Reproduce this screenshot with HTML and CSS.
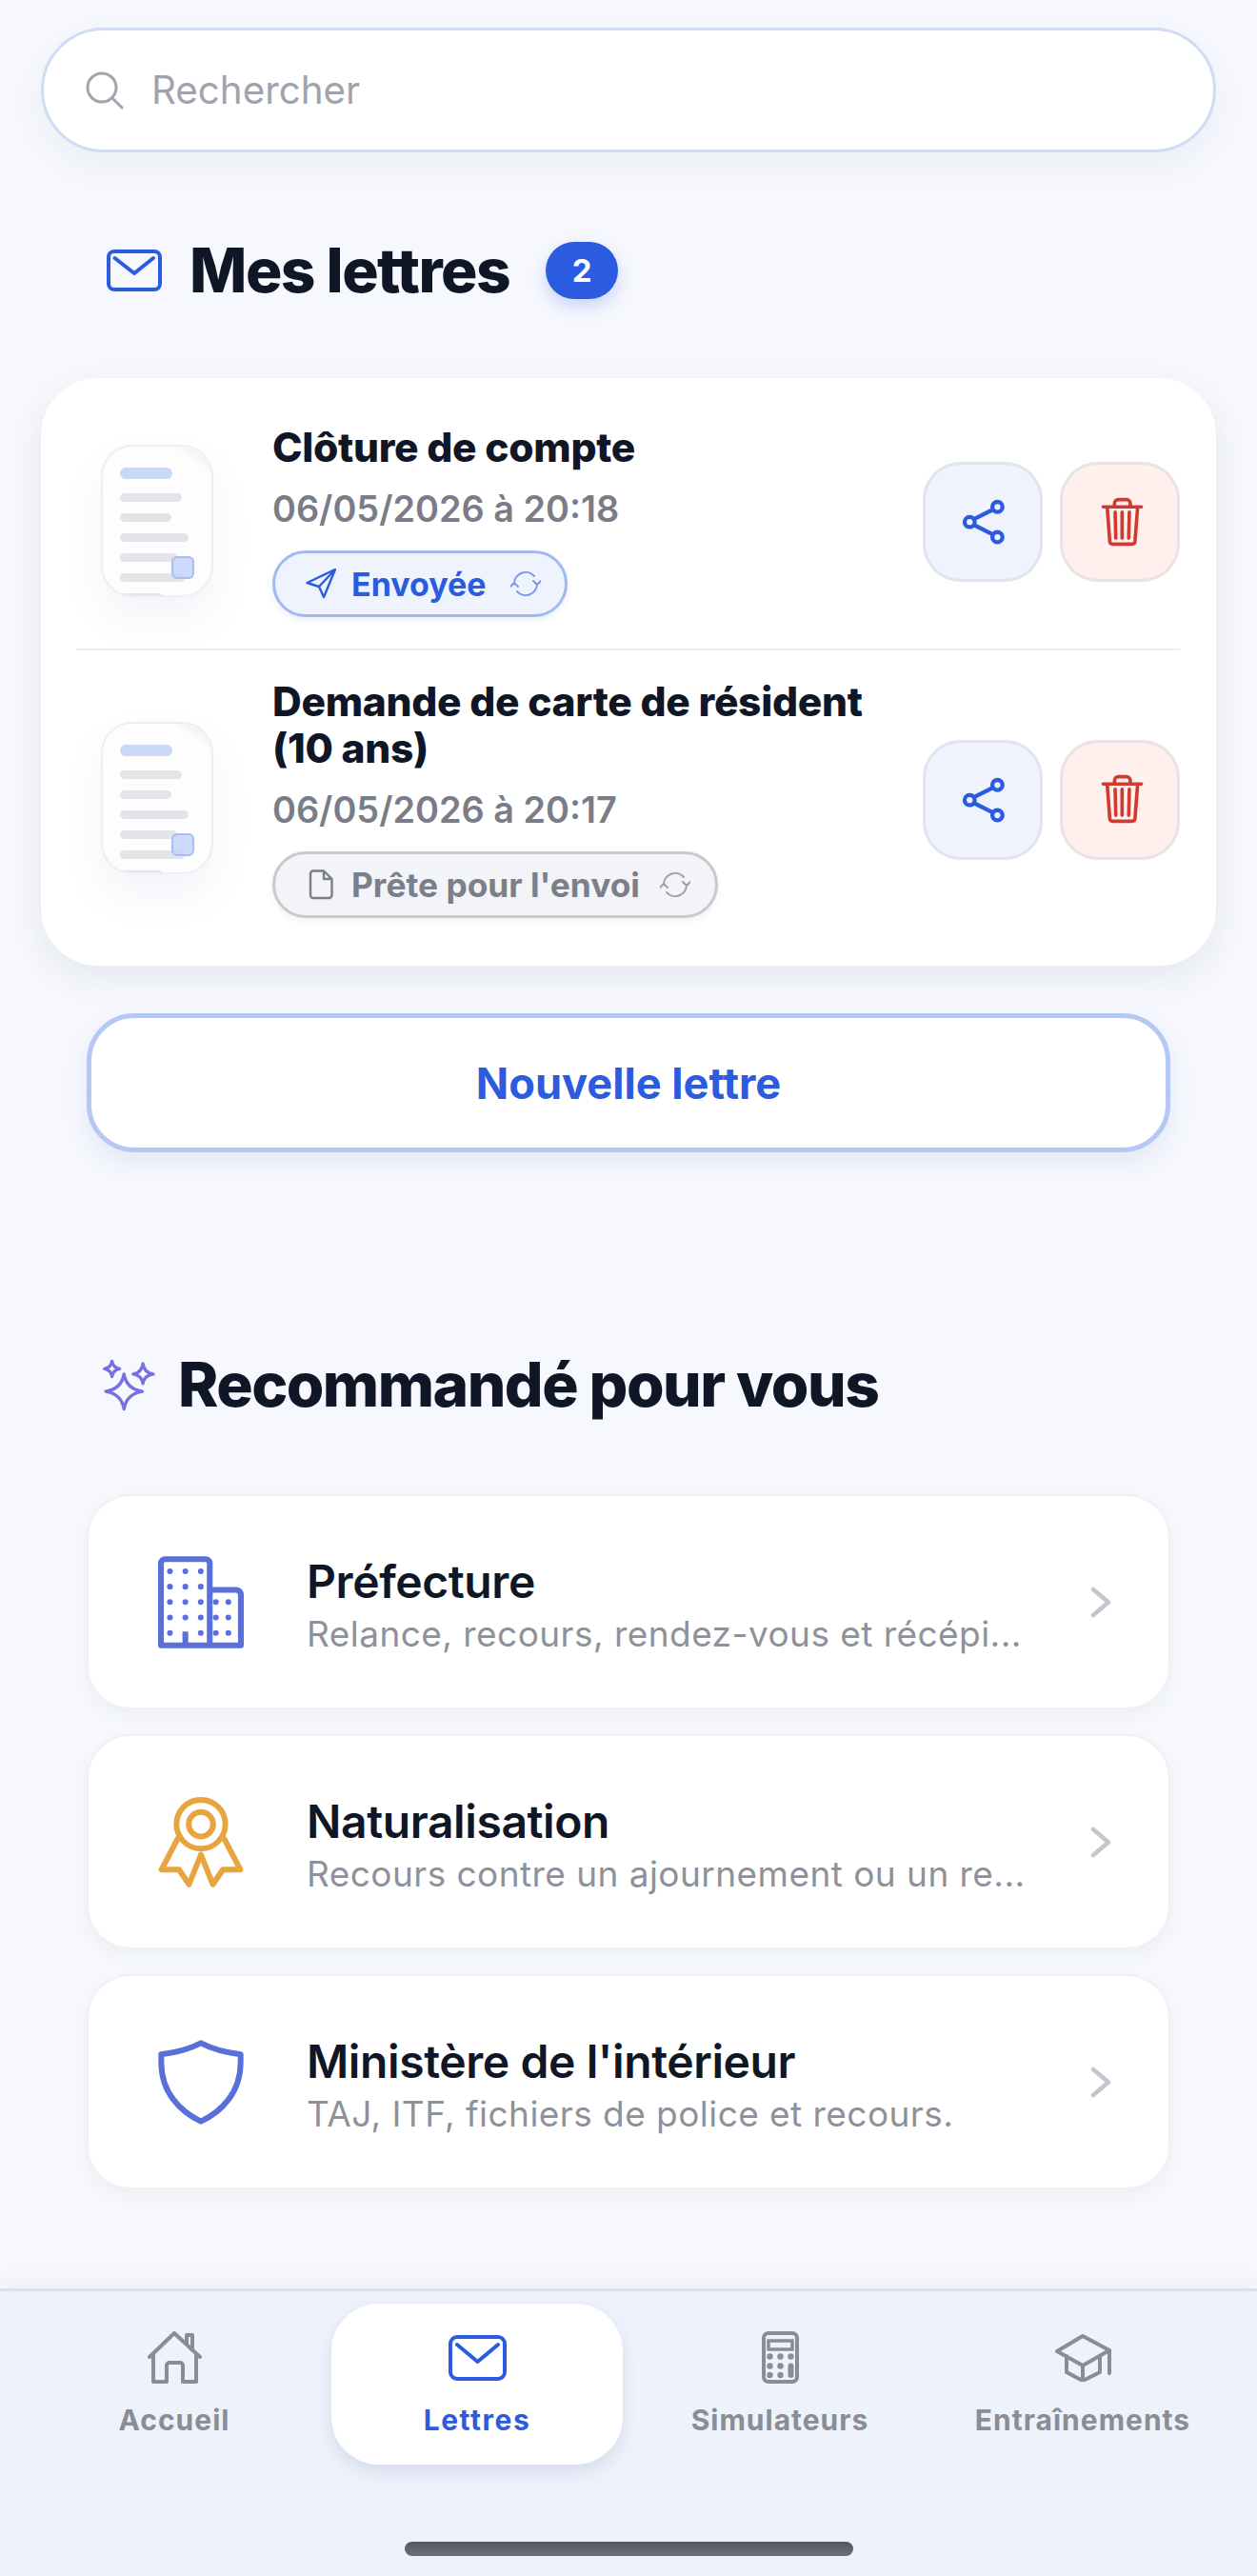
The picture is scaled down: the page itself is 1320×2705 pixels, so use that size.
FILE: index.html
```html
<!DOCTYPE html>
<html lang="fr">
<head>
<meta charset="utf-8">
<title>Mes lettres</title>
<link rel="stylesheet" href="styles.css">
</head>
<body>
<main class="content">
  <div class="search">
    <svg class="search-icon" viewBox="0 0 40 40" fill="none" stroke="#a3a5ae" stroke-width="3" stroke-linecap="round"><circle cx="17" cy="17" r="15"/><path d="M28 28l10 10"/></svg>
    <span class="search-text">Rechercher</span>
  </div>

  <div class="letters-head">
    <svg class="head-mail" viewBox="0 0 58 44" fill="none" stroke="#2b5ce0" stroke-width="4" stroke-linecap="round" stroke-linejoin="round"><rect x="2" y="2" width="54" height="40" rx="6"/><path d="M8.5 9L29 25 49 9"/></svg>
    <h1 class="section-title">Mes lettres</h1>
    <span class="badge">2</span>
  </div>

  <section class="letters-card">
    <article class="letter letter-first">
      <div class="doc">
        <span class="doc-fold"></span>
        <span class="bar bar-blue"></span><span class="bar w65"></span><span class="bar w54"></span><span class="bar w72"></span><span class="bar w60"></span><span class="bar w68"></span><span class="bar w45"></span>
        <span class="doc-chip"></span>
      </div>
      <div class="letter-body">
        <h2 class="letter-title">Clôture de compte</h2>
        <div class="letter-date">06/05/2026 à 20:18</div>
        <div class="pill pill-sent">
          <svg class="pill-icon" viewBox="0 0 32 32" fill="none" stroke="#2b5ce0" stroke-width="2.4" stroke-linejoin="round"><path d="M31 1L1.5 15 14 19 19 30zM14 19L31 1"/></svg>
          <span>Envoyée</span>
          <svg class="pill-sync sync-blue" viewBox="0 0 32 30" fill="none" stroke="#2b5ce0" stroke-width="2" stroke-linecap="round" stroke-linejoin="round"><path d="M4 15A12 12 0 0 1 25 7M28 15A12 12 0 0 1 7 23M24 12l4 4 4-4M0 18l4-4 4 4"/></svg>
        </div>
      </div>
      <div class="letter-actions">
        <button class="action action-share"><svg class="share-icon" viewBox="330 250 145 155" fill="none" stroke="#2b5ce0" stroke-width="13"><circle cx="443" cy="280" r="16"/><circle cx="355" cy="328" r="16"/><circle cx="443" cy="376" r="16"/><path d="M370 318L428 289M370 338L428 367"/></svg></button>
        <button class="action action-delete"><svg class="trash-icon" viewBox="765 250 135 160" fill="none" stroke="#d13a2e" stroke-width="11" stroke-linecap="round" stroke-linejoin="round"><path d="M772 281H893M808 278v-8a12 12 0 0 1 12-12h26a12 12 0 0 1 12 12v8M785 285l8 105a10 10 0 0 0 10 9h60a10 10 0 0 0 10-9l8-105M810 298l2 82M832 298v82M855 298l-2 82"/></svg></button>
      </div>
    </article>

    <article class="letter letter-second">
      <div class="doc">
        <span class="doc-fold"></span>
        <span class="bar bar-blue"></span><span class="bar w65"></span><span class="bar w54"></span><span class="bar w72"></span><span class="bar w60"></span><span class="bar w68"></span><span class="bar w45"></span>
        <span class="doc-chip"></span>
      </div>
      <div class="letter-body">
        <h2 class="letter-title">Demande de carte de résident<br>(10 ans)</h2>
        <div class="letter-date">06/05/2026 à 20:17</div>
        <div class="pill pill-ready">
          <svg class="pill-icon" viewBox="-3 0 32 32" fill="none" stroke="#7c7f89" stroke-width="2.4" stroke-linejoin="round"><path d="M5 1.5H16L24.5 10V27a3 3 0 0 1-3 3H5a3 3 0 0 1-3-3V4.5a3 3 0 0 1 3-3zM16 1.5V10H24.5"/></svg>
          <span>Prête pour l'envoi</span>
          <svg class="pill-sync sync-gray" viewBox="0 0 32 30" fill="none" stroke="#7c7f89" stroke-width="2" stroke-linecap="round" stroke-linejoin="round"><path d="M4 15A12 12 0 0 1 25 7M28 15A12 12 0 0 1 7 23M24 12l4 4 4-4M0 18l4-4 4 4"/></svg>
        </div>
      </div>
      <div class="letter-actions">
        <button class="action action-share"><svg class="share-icon" viewBox="330 250 145 155" fill="none" stroke="#2b5ce0" stroke-width="13"><circle cx="443" cy="280" r="16"/><circle cx="355" cy="328" r="16"/><circle cx="443" cy="376" r="16"/><path d="M370 318L428 289M370 338L428 367"/></svg></button>
        <button class="action action-delete"><svg class="trash-icon" viewBox="765 250 135 160" fill="none" stroke="#d13a2e" stroke-width="11" stroke-linecap="round" stroke-linejoin="round"><path d="M772 281H893M808 278v-8a12 12 0 0 1 12-12h26a12 12 0 0 1 12 12v8M785 285l8 105a10 10 0 0 0 10 9h60a10 10 0 0 0 10-9l8-105M810 298l2 82M832 298v82M855 298l-2 82"/></svg></button>
      </div>
    </article>
  </section>

  <button class="new-letter">Nouvelle lettre</button>

  <div class="rec-head">
    <svg class="sparkles" viewBox="140 85 172 170" fill="none" stroke="#7a6fe0" stroke-width="10" stroke-linejoin="round"><path d="M210 135Q218 182 268 190 218 198 210 246 202 198 152 190 202 182 210 135z"/><path d="M172 94Q175 115 196 118 175 121 172 143 169 121 148 118 169 115 172 94z"/><path d="M270 102Q274 131 303 135 274 139 270 165 266 139 239 135 266 131 270 102z"/></svg>
    <h1 class="section-title">Recommandé pour vous</h1>
  </div>

  <ul class="rec-list">
    <li class="rec-card">
      <svg class="rec-icon" viewBox="317 703 267 287">
        <g fill="none" stroke="#5b6fd8" stroke-width="18" stroke-linejoin="round"><path d="M326 981V725a13 13 0 0 1 13-13H465a13 13 0 0 1 13 13V981zM478 808H560a15 15 0 0 1 15 15V981H478M402 981V938"/></g>
        <g fill="#5b6fd8"><circle cx="354" cy="750" r="9"/><circle cx="402" cy="750" r="9"/><circle cx="450" cy="750" r="9"/><circle cx="354" cy="798" r="9"/><circle cx="402" cy="798" r="9"/><circle cx="450" cy="798" r="9"/><circle cx="354" cy="846" r="9"/><circle cx="402" cy="846" r="9"/><circle cx="450" cy="846" r="9"/><circle cx="354" cy="894" r="9"/><circle cx="402" cy="894" r="9"/><circle cx="450" cy="894" r="9"/><circle cx="354" cy="942" r="9"/><circle cx="450" cy="942" r="9"/><circle cx="497" cy="846" r="9"/><circle cx="536" cy="846" r="9"/><circle cx="497" cy="894" r="9"/><circle cx="536" cy="894" r="9"/><circle cx="497" cy="942" r="9"/><circle cx="536" cy="942" r="9"/></g>
      </svg>
      <div class="rec-text"><h3 class="rec-title">Préfecture</h3><p class="rec-sub">Relance, recours, rendez-vous et récépi...</p></div>
      <svg class="chevron" viewBox="0 0 22 33" fill="none" stroke="#c4c6cd" stroke-width="4.500" stroke-linecap="round" stroke-linejoin="round"><path d="M3 3l16 13.5L3 30"/></svg>
    </li>
    <li class="rec-card">
      <svg class="rec-icon" viewBox="135 75 270 295" fill="none" stroke="#e8a43f" stroke-width="18" stroke-linejoin="round" stroke-linecap="round"><circle cx="270" cy="165" r="78"/><circle cx="270" cy="165" r="39"/><path d="M195 212L144 310H200L232 357 270 262 308 357 340 310H396L345 212"/></svg>
      <div class="rec-text"><h3 class="rec-title">Naturalisation</h3><p class="rec-sub">Recours contre un ajournement ou un re...</p></div>
      <svg class="chevron" viewBox="0 0 22 33" fill="none" stroke="#c4c6cd" stroke-width="4.500" stroke-linecap="round" stroke-linejoin="round"><path d="M3 3l16 13.5L3 30"/></svg>
    </li>
    <li class="rec-card">
      <svg class="rec-icon" viewBox="135 845 270 265" fill="none" stroke="#5b6fd8" stroke-width="18" stroke-linejoin="round"><path d="M270 854C230 875 190 884 145 890V915C145 1010 205 1070 270 1101 335 1070 395 1010 395 915V890C350 884 310 875 270 854z"/></svg>
      <div class="rec-text"><h3 class="rec-title">Ministère de l'intérieur</h3><p class="rec-sub">TAJ, ITF, fichiers de police et recours.</p></div>
      <svg class="chevron" viewBox="0 0 22 33" fill="none" stroke="#c4c6cd" stroke-width="4.500" stroke-linecap="round" stroke-linejoin="round"><path d="M3 3l16 13.5L3 30"/></svg>
    </li>
  </ul>
</main>

<nav class="tabbar">
  <div class="tabs">
    <a class="tab">
      <span class="tab-icon"><svg class="i-home" viewBox="0 0 57 55" fill="none" stroke="#8a8d96" stroke-width="4" stroke-linecap="round" stroke-linejoin="round"><path d="M2 27L28 2 55 27M6 25V53H20V36a3 3 0 0 1 3-3h11a3 3 0 0 1 3 3V53H51V25M41 13V4H47V20"/></svg></span>
      <span class="tab-label">Accueil</span>
    </a>
    <a class="tab tab-active">
      <span class="tab-icon"><svg class="i-mail" viewBox="0 0 61 48" fill="none" stroke="#2b5ce0" stroke-width="4" stroke-linecap="round" stroke-linejoin="round"><rect x="2" y="2" width="57" height="44" rx="7"/><path d="M9 10L30.500 28 52 10"/></svg></span>
      <span class="tab-label">Lettres</span>
    </a>
    <a class="tab">
      <span class="tab-icon"><svg class="i-calc" viewBox="0 0 39 55" fill="none" stroke="#8a8d96" stroke-width="4"><rect x="2" y="2" width="35" height="51" rx="5"/><rect x="7" y="10" width="25" height="9" stroke-width="3.500"/><g fill="#8a8d96" stroke="none"><circle cx="8.500" cy="26.500" r="3.200"/><circle cx="19.500" cy="26.500" r="3.200"/><circle cx="30.500" cy="26.500" r="3.200"/><circle cx="8.500" cy="36.500" r="3.200"/><circle cx="19.500" cy="36.500" r="3.200"/><circle cx="8.500" cy="46" r="3.200"/><circle cx="19.500" cy="46" r="3.200"/><rect x="27.500" y="33.500" width="6" height="15.500" rx="3"/></g></svg></span>
      <span class="tab-label">Simulateurs</span>
    </a>
    <a class="tab">
      <span class="tab-icon"><svg class="i-cap" viewBox="0 0 59 50" fill="none" stroke="#8a8d96" stroke-width="4" stroke-linecap="round" stroke-linejoin="round"><path d="M2 18L29 2 57 17 29 33zM12 23V40L29 49 47 40V23M29 33V49M57 17V41"/></svg></span>
      <span class="tab-label">Entraînements</span>
    </a>
  </div>
  <div class="home-bar"></div>
</nav>
</body>
</html>
```

FILE: styles.css
```css
* { box-sizing: border-box; }
html, body { margin: 0; padding: 0; }
body {
  min-height: 100vh;
  display: flex;
  flex-direction: column;
  background: #f6f8fd;
  font-family: "Inter", "Liberation Sans", sans-serif;
  color: #0f1726;
}
h1, h2, h3, p, ul { margin: 0; padding: 0; }
ul { list-style: none; }

.content { flex: 1; padding-top: 29px; }

.search {
  height: 131px;
  margin: 0 43px;
  display: flex;
  align-items: center;
  padding-left: 44px;
  gap: 29px;
  background: #fff;
  border: 3px solid #cfdcf6;
  border-radius: 66px;
  box-shadow: 0 14px 34px rgba(70, 80, 120, .06);
}
.search-icon { width: 40px; height: 40px; flex: none; }
.search-text { font-size: 40.300px; line-height: 48px; color: #a0a3ad; }

.letters-head {
  display: flex;
  align-items: center;
  height: 60px;
  margin-top: 94px;
  padding-left: 112px;
}
.head-mail { width: 58px; height: 44px; flex: none; margin-right: 29px; }
.section-title {
  font-size: 64px;
  line-height: 76px;
  font-weight: 800;
  letter-spacing: -1.500px;
  color: #0f1726;
}
.badge {
  width: 76px;
  height: 60px;
  margin-left: 38px;
  display: flex;
  align-items: center;
  justify-content: center;
  border-radius: 30px;
  background: #2b5ce0;
  color: #fff;
  font-size: 33px;
  font-weight: 700;
  box-shadow: 0 8px 18px rgba(43, 92, 224, .22);
}

.letters-card {
  margin: 83px 43px 0;
  padding: 17px 38px 21px 37px;
  background: #fff;
  border-radius: 60px;
  box-shadow: 0 12px 34px rgba(60, 70, 100, .09);
}
.letter { display: flex; align-items: center; padding-left: 26px; }
.letter-first { padding-top: 31px; padding-bottom: 33px; border-bottom: 2px solid #eceef2; }
.letter-second { padding-top: 29px; padding-bottom: 29px; }

.doc {
  position: relative;
  flex: none;
  width: 118px;
  height: 160px;
  padding: 22px 0 0 18px;
  margin-right: 62px;
  display: flex;
  flex-direction: column;
  gap: 12px;
  overflow: hidden;
  background: #fdfdfe;
  border: 2px solid #eeeff3;
  border-radius: 33px;
  box-shadow: 0 22px 44px rgba(80, 100, 170, .07);
}
.doc-fold {
  position: absolute;
  top: -2px;
  right: -2px;
  width: 38px;
  height: 30px;
  background: linear-gradient(215deg, #eef0f4 0%, #f6f7f9 45%, rgba(255, 255, 255, 0) 60%);
}
.bar { display: block; flex: none; height: 9px; border-radius: 5px; background: #e3e4e9; }
.bar-blue { width: 55px; height: 12px; margin-bottom: 3px; border-radius: 6px; background: #c9d8f6; }
.w65 { width: 65px; }
.w54 { width: 54px; }
.w72 { width: 72px; }
.w60 { width: 60px; }
.w68 { width: 68px; }
.w45 { width: 45px; }
.doc-chip {
  position: absolute;
  left: 72px;
  top: 115px;
  width: 24px;
  height: 24px;
  border-radius: 6px;
  background: rgba(196, 212, 248, .85);
  border: 2px solid rgba(160, 184, 242, .8);
}

.letter-body { flex: 1; min-width: 0; }
.letter-title { font-size: 42.500px; line-height: 49px; font-weight: 800; letter-spacing: -.3px; color: #0f1726; }
.letter-date { margin-top: 18px; font-size: 37.800px; line-height: 44px; font-weight: 600; color: #7a7d87; }

.pill {
  display: inline-flex;
  align-items: center;
  height: 70px;
  margin-top: 22px;
  border-radius: 35px;
  font-weight: 700;
  white-space: nowrap;
}
.pill-sent {
  padding: 0 25px 0 32px;
  font-size: 34px;
  color: #2b5ce0;
  background: #eff3fd;
  border: 3px solid #a2b9ef;
  box-shadow: 0 3px 6px rgba(43, 92, 224, .1);
}
.pill-ready {
  padding: 0 26px 0 32px;
  font-size: 35.300px;
  color: #7c7f89;
  background: #f2f4f8;
  border: 3px solid #c7c9cf;
  box-shadow: 0 3px 6px rgba(60, 60, 70, .08);
}
.pill-icon { width: 32px; height: 32px; flex: none; margin-right: 16px; }
.pill-sync { width: 32px; height: 30px; flex: none; margin-left: 25px; }
.pill-ready .pill-sync { margin-left: 21px; }
.sync-blue { opacity: .6; }
.sync-gray { opacity: .7; }

.letter-actions { display: flex; flex: none; gap: 18px; margin-left: 24px; }
.letter-first .letter-actions { margin-top: 3px; }
.letter-second .letter-actions { margin-top: 3px; }
.action {
  width: 126px;
  height: 126px;
  padding: 0 0 0 4px;
  display: flex;
  align-items: center;
  justify-content: center;
  border-radius: 40px;
  font: inherit;
}
.action-share { background: #eff3fd; border: 3px solid #e1e4ee; }
.action-delete { background: #fff0ee; border: 3px solid #e9e3e5; }
.share-icon { width: 48px; height: 52px; }
.trash-icon { width: 45px; height: 53px; }

.new-letter {
  display: block;
  width: 1138px;
  height: 146px;
  margin: 50px 0 0 91px;
  padding: 0;
  background: #fff;
  border: 5px solid #b5c7f3;
  border-radius: 50px;
  box-shadow: 0 10px 26px rgba(60, 90, 170, .1);
  font: inherit;
  font-size: 45.200px;
  font-weight: 700;
  color: #2b5ce0;
}

.rec-head {
  display: flex;
  align-items: center;
  height: 76px;
  margin-top: 206px;
  padding-left: 107px;
}
.sparkles { width: 57px; height: 57px; flex: none; margin-right: 23px; }

.rec-list {
  margin: 77px 91px 0;
  display: flex;
  flex-direction: column;
  gap: 26px;
}
.rec-card {
  display: flex;
  align-items: center;
  height: 226px;
  padding: 0 60px 0 73px;
  background: #fff;
  border: 2px solid #f0f1f5;
  border-radius: 46px;
  box-shadow: 0 6px 16px rgba(60, 70, 100, .05);
}
.rec-icon { width: 90px; height: 97px; flex: none; margin-right: 66px; }
.rec-text { flex: 1; min-width: 0; padding-top: 9px; }
.rec-title { font-size: 48px; line-height: 54px; font-weight: 600; letter-spacing: -.4px; color: #0f1726; }
.rec-sub { margin-top: 5px; font-size: 37px; line-height: 46px; font-weight: 400; color: #8f919a; letter-spacing: .45px; white-space: nowrap; }
.chevron { width: 22px; height: 33px; flex: none; }

.tabbar {
  height: 302px;
  padding: 0 24px;
  display: flex;
  flex-direction: column;
  background: #eef2fb;
  border-top: 3px solid #d8e1f4;
  box-shadow: 0 -12px 20px rgba(70, 70, 80, .03);
}
.tabs { display: grid; grid-template-columns: repeat(4, 318px); height: 263px; padding-top: 13px; }
.tab {
  display: flex;
  flex-direction: column;
  align-items: center;
  height: 169px;
  margin: 0 6px;
  padding-top: 29px;
  border-radius: 50px;
  font-size: 30px;
  font-weight: 700;
  letter-spacing: 1px;
  color: #8a8d96;
}
.tab-active {
  background: #fff;
  color: #2b5ce0;
  letter-spacing: 1.500px;
  box-shadow: 0 8px 18px rgba(70, 90, 150, .14);
}
.tab-icon { height: 55px; display: flex; align-items: center; justify-content: center; }
.tab-label { margin-top: 20px; line-height: 36px; }
.i-home { width: 57px; height: 55px; }
.i-mail { width: 61px; height: 48px; }
.i-calc { width: 39px; height: 55px; }
.i-cap { width: 59px; height: 50px; }

.home-bar {
  width: 471px;
  height: 15px;
  margin-left: 401px;
  border-radius: 8px;
  background: linear-gradient(#55585f, #6c707a);
}
```
